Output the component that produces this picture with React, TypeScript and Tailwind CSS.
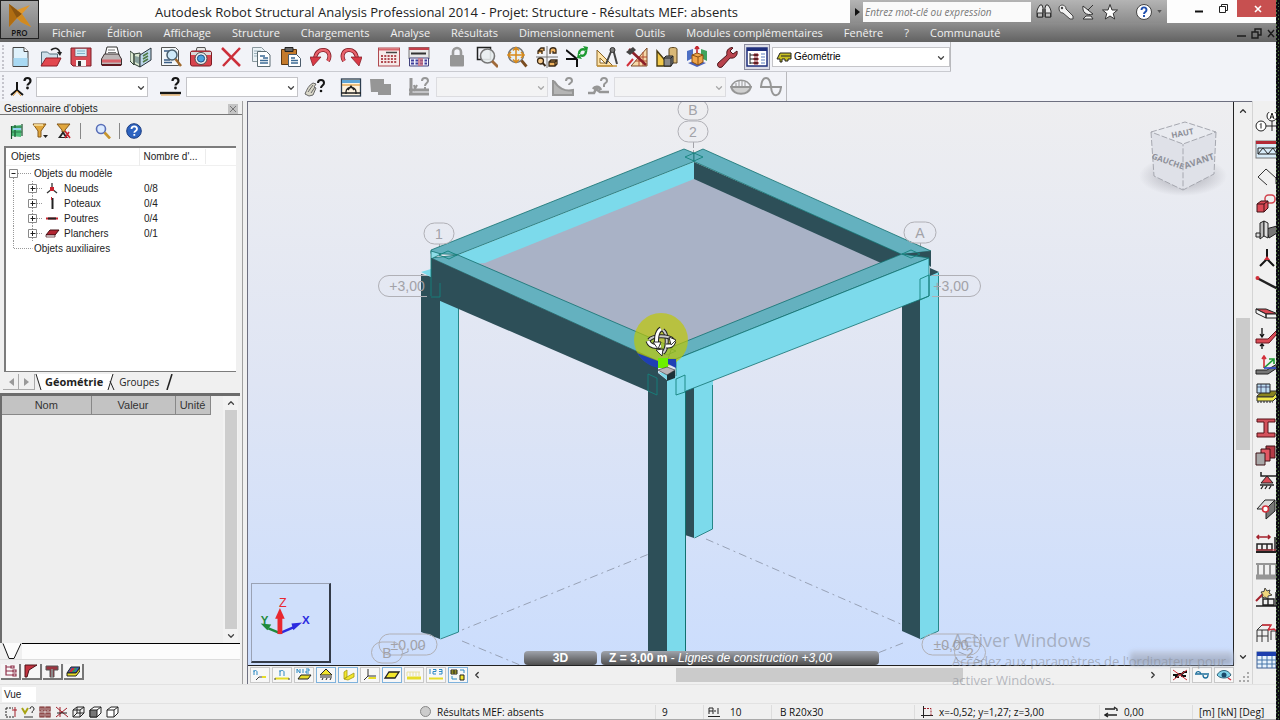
import type { ReactNode } from 'react'
import { ChevronDown, ChevronLeft, ChevronRight, ChevronUp } from 'lucide-react'

const MENUS = [
  'Fichier',
  'Édition',
  'Affichage',
  'Structure',
  'Chargements',
  'Analyse',
  'Résultats',
  'Dimensionnement',
  'Outils',
  'Modules complémentaires',
  'Fenêtre',
  '?',
  'Communauté',
]

interface Tool {
  name: string
  icon: ReactNode
}

const FILE_TOOLS: Tool[] = [
  {
    name: 'Nouveau',
    icon: (
      <g>
        <path d="M3 1.5h11l4 4v15H3z" fill="#dff1fb" stroke="#444" />
        <path d="M3.5 12h14v8h-14z" fill="#a9d9f3" />
        <path d="M14 1.5v4h4" fill="#fff" stroke="#444" />
      </g>
    ),
  },
  {
    name: 'Ouvrir',
    icon: (
      <g>
        <path d="M1.5 19V6h6l2 2h8v5" fill="#cfe0ea" stroke="#56707e" />
        <path d="M1 20l5-8h15l-4 8z" fill="#e2474f" stroke="#8d1c26" />
        <path d="M11 4c4-3 8-2 9 3" fill="none" stroke="#222" strokeWidth="1.6" />
        <path d="M17 6h5l-2 4z" fill="#222" />
      </g>
    ),
  },
  {
    name: 'Enregistrer',
    icon: (
      <g>
        <path d="M1 2h20v18H3l-2-2z" fill="#d94a55" stroke="#7d1e28" />
        <path d="M5 2.5h12v8H5z" fill="#d3ebf5" stroke="#8c3b45" strokeWidth=".7" />
        <path d="M7 5h8M7 7.500h8" stroke="#7fb0c6" />
        <path d="M6 14h10v6H6z" fill="#f6f6f6" />
        <path d="M8 15h3v5H8z" fill="#333" />
      </g>
    ),
  },
  {
    name: 'Imprimer',
    icon: (
      <g>
        <path d="M5 9l2-8h10l2 8z" fill="#fff" stroke="#333" />
        <path d="M8 4h7M8 6.500h8" stroke="#777" />
        <path d="M1.500 13l3-5h14l3 5v6h-20z" fill="#bdb6b6" stroke="#3b3030" />
        <path d="M2 13.500h19v3H2z" fill="#d9636b" />
        <path d="M2 19h19" stroke="#5f1a20" strokeWidth="2" />
      </g>
    ),
  },
  {
    name: 'Note de calcul',
    icon: (
      <g>
        <path d="M0 5l4 3v11l-4-4zM10 7v14l-6-3V8z" fill="#dbe9d2" stroke="#2f3f35" />
        <path d="M10 9l11-7v12l-11 7z" fill="#bcd7ea" stroke="#28333b" />
        <path d="M13 10l5-3M13 13l5-3M13 16l5-3" stroke="#4f7a45" strokeWidth="1.500" />
        <path d="M5 10l4 1v7l-4-2z" fill="#8aa3a0" />
      </g>
    ),
  },
  {
    name: 'Aperçu avant impression',
    icon: (
      <g>
        <path d="M1.500 1.500h14l3 3v15h-17z" fill="#f3f7fa" stroke="#555" />
        <path d="M4 5h6M4 14h6M4 16.500h8" stroke="#3a5e86" strokeWidth="1.400" />
        <circle cx="12" cy="9" r="5" fill="#cfeafa" stroke="#4a6170" strokeWidth="1.500" />
        <path d="M15.500 13l5.500 7" stroke="#a0692d" strokeWidth="2.500" />
      </g>
    ),
  },
  {
    name: 'Capture d’écran',
    icon: (
      <g>
        <path d="M7 1.500h8l1 4H6z" fill="#e8e8e8" stroke="#555" />
        <rect x=".5" y="5" width="21" height="15" rx="2" fill="#d8444e" stroke="#7e1c24" />
        <path d="M1 6h20v3H1z" fill="#d9d9d9" />
        <circle cx="11" cy="12.500" r="6" fill="#f1f1f1" stroke="#4a4a4a" />
        <circle cx="11" cy="12.500" r="3.600" fill="#4aa2dd" stroke="#1c4f86" />
      </g>
    ),
  },
  {
    name: 'Supprimer',
    icon: <path d="M2 2l18 18M20 2L3 20" stroke="#cc2f3a" strokeWidth="2.500" />,
  },
  {
    name: 'Copier',
    icon: (
      <g>
        <path d="M2.500 1.500h9l3 3v11h-12z" fill="#e9f1f5" stroke="#8a989e" />
        <path d="M4 5h7M4 7.500h8M4 10h8" stroke="#9db2bc" />
        <path d="M7.500 5.500h9l3.500 3.500v11.500H7.500z" fill="#fff" stroke="#5b6b72" />
        <path d="M10 10h5M10 17h8M10 14.500h8M13 12h5" stroke="#3d6b95" strokeWidth="1.300" />
      </g>
    ),
  },
  {
    name: 'Coller',
    icon: (
      <g>
        <path d="M1.500 3.500h15v15h-15z" fill="#c47a2c" stroke="#5d3710" />
        <path d="M5 1.500h8v4H5z" fill="#666" stroke="#222" />
        <path d="M8.500 8.500h8l4 4v8h-12z" fill="#fff" stroke="#4b5b6b" />
        <path d="M11 12h4M11 14.500h7M11 17h7" stroke="#3d6b95" strokeWidth="1.300" />
      </g>
    ),
  },
  {
    name: 'Annuler',
    icon: (
      <g>
        <path d="M5 14C5 6 10 3.500 14 4c5 .6 7 6 4 11" fill="none" stroke="#7d1822" strokeWidth="4" />
        <path d="M5 14C5 6 10 3.500 14 4c5 .6 7 6 4 11" fill="none" stroke="#e8636c" strokeWidth="2.400" />
        <path d="M0 11h11l-8 9z" fill="#d93a46" stroke="#7d1822" strokeWidth=".7" />
      </g>
    ),
  },
  {
    name: 'Rétablir',
    icon: (
      <g>
        <path d="M17 14C17 6 12 3.500 8 4c-5 .6-7 6-4 11" fill="none" stroke="#7d1822" strokeWidth="4" />
        <path d="M17 14C17 6 12 3.500 8 4c-5 .6-7 6-4 11" fill="none" stroke="#e8636c" strokeWidth="2.400" />
        <path d="M22 11H11l8 9z" fill="#d93a46" stroke="#7d1822" strokeWidth=".7" />
      </g>
    ),
  },
]

const CALC_TOOLS: Tool[] = [
  {
    name: 'Calculer',
    icon: (
      <g>
        <rect x=".5" y="2" width="21" height="18" fill="#f6e9e9" stroke="#b04a50" />
        <path d="M1 2.500h20v2H1z" fill="#d9636b" />
        <path d="M8 6.500h11" stroke="#444" strokeWidth="1.500" />
        <path d="M3 10h16M3 13h16M3 16h16" stroke="#b04a50" strokeWidth="2" strokeDasharray="2 1.300" />
      </g>
    ),
  },
  {
    name: 'Gestionnaire de calculs',
    icon: (
      <g>
        <rect x="1" y="1.500" width="20" height="11" fill="#e9e9e9" stroke="#777" />
        <path d="M1 1.500h20v2.500H1z" fill="#c4404b" />
        <path d="M3 7.500h15" stroke="#333" strokeWidth="2" />
        <path d="M1.500 12h19v8h-19z" fill="#f2f2fa" stroke="#43437c" />
        <path d="M3 14.500h16M3 17.500h16" stroke="#3e3e9c" strokeWidth="2" strokeDasharray="3 1.500" />
        <path d="M10 12h5v8h-5z" fill="#d06a75" opacity=".7" />
      </g>
    ),
  },
]

const VIEW_TOOLS: Tool[] = [
  {
    name: 'Verrouiller',
    icon: (
      <g>
        <path d="M7 10V6a4 4 0 0 1 8 0v4" fill="none" stroke="#9a9a9a" strokeWidth="2.600" />
        <rect x="4" y="9" width="14" height="11.500" rx="1" fill="#969696" />
      </g>
    ),
  },
  {
    name: 'Zoom fenêtre',
    icon: (
      <g>
        <path d="M1.500 1.500h13v12h-13z" fill="none" stroke="#222" strokeWidth="1.500" />
        <circle cx="11.500" cy="10" r="7" fill="#e9eef0" fillOpacity=".9" stroke="#777" strokeWidth="1.600" />
        <path d="M16 15l6 6" stroke="#a06a3a" strokeWidth="2.800" />
      </g>
    ),
  },
  {
    name: 'Zoom tout',
    icon: (
      <g>
        <circle cx="10" cy="9" r="7.500" fill="#e6eef3" stroke="#777" strokeWidth="1.600" />
        <path d="M10 2v14M3 9h14M7 4.500l3-3 3 3M7 13.500l3 3 3-3M5 6L2 9l3 3M15 6l3 3-3 3" fill="none" stroke="#d98a1a" strokeWidth="1.500" />
        <path d="M15.500 14.500l5 6" stroke="#7a4c20" strokeWidth="2.800" />
      </g>
    ),
  },
  {
    name: 'Vue, zoom, rotation',
    icon: (
      <g fill="none" stroke="#3b2a18" strokeWidth="1.300">
        <path d="M11 0v22M0 11h22" stroke="#777" strokeWidth="1" />
        <path d="M2 8V5l3-3h3v3M2 5h4v3" fill="#f0b35f" />
        <path d="M14 8V4c0-3 6-3 6 0v3h-3V5" fill="#f0b35f" />
        <circle cx="4.500" cy="15" r="3" fill="#f6c98a" />
        <path d="M6.500 17l3 3" strokeWidth="2" />
        <path d="M13 16l2-2h6v4l-2 2h-6zM13 16h6v4M19 16l2-2" fill="#f0b35f" />
      </g>
    ),
  },
  {
    name: 'Régénérer',
    icon: (
      <g fill="none">
        <path d="M0 4l11 9M11 13v8M0 13h11" stroke="#111" strokeWidth="2" />
        <path d="M13 8c0-4 3-6 7-4M20 5c0 4-3 6-6 4" stroke="#1d9a31" strokeWidth="2.400" />
        <path d="M17 0l5 1-1 5zM12 7l-1 5 5 1z" fill="#1d9a31" />
      </g>
    ),
  },
  {
    name: 'Lignes de construction',
    icon: (
      <g>
        <path d="M1 4v16h16z" fill="#ffe3a8" stroke="#8a6424" />
        <path d="M4 12v5h5z" fill="#fff" stroke="#8a6424" />
        <path d="M16 3l-6 15M17 3l4 15" stroke="#444" strokeWidth="2" />
        <circle cx="16.500" cy="4" r="2.500" fill="#777" stroke="#333" />
        <path d="M1 20h20" stroke="#c9973e" strokeWidth="1.500" />
      </g>
    ),
  },
  {
    name: 'Maillage',
    icon: (
      <g>
        <path d="M21 2v18H5z" fill="#f6d9a8" stroke="#7d4a24" />
        <path d="M17 6v14M13 10v10M9 15h12M13 11h8" stroke="#b04a30" />
        <path d="M3 3l17 16" stroke="#8d1f28" strokeWidth="2.500" />
        <path d="M0 6l7-5 3 3-6 5z" fill="#444" />
        <path d="M7 13l-6 7" stroke="#d22f3a" strokeWidth="2" />
      </g>
    ),
  },
  {
    name: 'Attributs',
    icon: (
      <g>
        <path d="M1 5v15h13z" fill="#f2c94b" stroke="#4a3c12" strokeWidth="1.400" />
        <path d="M13 3c0-2 8-2 8 0v14h-8z" fill="#d9b877" stroke="#5a4520" />
        <path d="M8 12l2-2h7v7l-2 3H8z" fill="#888" stroke="#222" />
        <path d="M8 12h7v8M15 12l2-2" fill="none" stroke="#222" />
      </g>
    ),
  },
  {
    name: 'Affichage des attributs',
    icon: (
      <g>
        <path d="M1 5l6-2v9l-6 3z" fill="#4d6fc4" />
        <path d="M21 5l-6-2v9l6 3z" fill="#3fa35c" />
        <path d="M2 17l9-3 9 3-9 4z" fill="#4c62b8" />
        <path d="M6 9l5-2 6 2v7l-5 3-6-3z" fill="#f0a54a" stroke="#8a4f12" />
        <path d="M6 9l6 2 5-2M12 11v8" fill="none" stroke="#8a4f12" />
        <path d="M11 0v7M9 3l2-3 2 3" stroke="#c42730" strokeWidth="1.600" fill="none" />
      </g>
    ),
  },
  {
    name: 'Outils',
    icon: (
      <path
        d="M2 17l9-8c-1-4 1-7 5-7.500l1 .5-3 3 3 3 4-3c1 4-2 8-7 7l-8 9c-3 1.500-5.500-1-4-4z"
        fill="#b9434e"
        stroke="#4b1419"
      />
    ),
  },
]

const SELECT_NODE = (
  <g>
    <path d="M7 6v8M7 14l-6 5M7 14l6 5" fill="none" stroke="#151515" strokeWidth="2" />
    <path d="M3 20l4-5 4 5" fill="none" stroke="#e39b3b" />
    <path d="M14.500 5c0-4 6-4 6 0 0 2.500-3 2.500-3 4.500" fill="none" stroke="#151515" strokeWidth="2.200" />
    <circle cx="17.500" cy="12" r="1.400" fill="#151515" />
  </g>
)

const SELECT_BAR = (
  <g>
    <path d="M0 17h21" stroke="#151515" strokeWidth="2.400" />
    <path d="M1 19h19" stroke="#e39b3b" />
    <path d="M12.500 5c0-4 6-4 6 0 0 2.500-3 2.500-3 4.500" fill="none" stroke="#151515" strokeWidth="2.200" />
    <circle cx="15.500" cy="12" r="1.400" fill="#151515" />
  </g>
)

const SELECT_HAND = (
  <g>
    <path d="M1 18c2-5 4-9 8-11l3 1-2 3 2 1-3 7-4 1z" fill="#d9d7c8" stroke="#666" />
    <path d="M4 16l5-7M7 17l4-6" stroke="#666" />
    <path d="M14 7c0-4 6-4 6 0 0 2.500-3 2.500-3 5" fill="none" stroke="#151515" strokeWidth="2" />
    <circle cx="17" cy="15" r="1.300" fill="#151515" />
  </g>
)

const SELECT_FRAME = (
  <g>
    <rect x="1.500" y="3" width="19" height="17" fill="#fdf3df" stroke="#2c3e50" strokeWidth="1.300" />
    <path d="M2 4h18v3H2z" fill="#5ea5d6" />
    <path d="M2 9h18" stroke="#d98a1a" />
    <path d="M6 18v-2c0-6 10-6 10 0v2M1 17h20M8 14l3-4 3 4" fill="none" stroke="#222" strokeWidth="1.300" />
  </g>
)

const SELECT_GREY = <path d="M0 3h14v5h7v11H8v-3H1z" fill="#969696" />

const CASE_LOAD = (
  <g>
    <path d="M3 2v15M1 14h20M1 18h20" stroke="#969696" strokeWidth="3" />
    <path d="M6 9l1 4 2-4M14 5c0-4 6-4 6 0 0 2-3 2-3 5M17 11v2" fill="none" stroke="#969696" strokeWidth="2" />
  </g>
)

const MODE_A = (
  <g>
    <path d="M1 4v15h20v-5c-8 2-15-2-19-9" fill="#b5b5b5" stroke="#969696" strokeWidth="2" />
    <path d="M14 5c0-4 6-4 6 0 0 2-3 2-3 4" fill="none" stroke="#969696" strokeWidth="2" />
  </g>
)

const MODE_B = (
  <g>
    <path d="M0 17h6l2-4 4 3h9M5 13c2-3 6-3 8 1" fill="none" stroke="#969696" strokeWidth="2.600" />
    <path d="M13 5c0-4 6-4 6 0 0 2-3 2-3 4v2" fill="none" stroke="#969696" strokeWidth="2" />
  </g>
)

const DIAGRAM_BOWL = (
  <g fill="none" stroke="#969696" strokeWidth="1.500">
    <path d="M1 11c4-9 16-9 20 0" />
    <path d="M1 11h20c-3 9-17 9-20 0z" fill="#d0d0d0" strokeWidth="2" />
    <path d="M6 7v4M9 5v6M12 5v6M15 6v5" strokeWidth="1" />
  </g>
)

const DIAGRAM_WAVE = (
  <path d="M0 11h22M1 11c1-12 9-12 10 0s9 10 10 0" fill="none" stroke="#969696" strokeWidth="2" />
)

const SIDE_TOOLS: Tool[][] = [
  [
    {
      name: 'Axes de construction',
      icon: (
        <g fill="none" stroke="#222">
          <circle cx="6" cy="14" r="5" fill="#fff" />
          <path d="M6 11.500v5M5 12.500l1-1M11 14h11M17 9v10" />
          <circle cx="17" cy="4" r="5" fill="#fff" />
          <path d="M15 7l2-6 2 6M15.700 5h2.600" />
        </g>
      ),
    },
    {
      name: 'Profilés',
      icon: (
        <g>
          <rect x="1" y="2" width="22" height="17" fill="#d8ecf9" stroke="#777" />
          <path d="M1 2h22v3H1z" fill="#b32a36" />
          <path d="M3 9h19v6H3zM3 15l5-6 5 6 5-6 4 6" fill="none" stroke="#222" />
        </g>
      ),
    },
    {
      name: 'Polyligne',
      icon: <path d="M12 19L3 11l8-8 10 9v6" fill="none" stroke="#333" />,
    },
    {
      name: 'Objets',
      icon: (
        <g>
          <rect x="10" y="2" width="10" height="8" rx="3.500" fill="none" stroke="#d1444e" strokeWidth="1.500" />
          <path d="M2 11l4-3h7v7l-4 4H2z" fill="#db4a56" stroke="#3e1216" />
          <path d="M2 11h7v8M9 11l4-3" fill="none" stroke="#3e1216" />
        </g>
      ),
    },
    {
      name: 'Matériaux',
      icon: (
        <g>
          <path d="M11 9l11-3v7l-8 5z" fill="#777" stroke="#222" />
          <path d="M5 3l4-2v15l-4 3z" fill="#bbb" stroke="#222" />
          <path d="M9 1l4 2v15l-4-2z" fill="#ddd" stroke="#222" />
          <path d="M1 13h4v4H1z" fill="#ddd" stroke="#222" />
        </g>
      ),
    },
    {
      name: 'Noeuds',
      icon: (
        <g>
          <path d="M12 2v10M12 12l-7 7M12 12l7 7" stroke="#151515" strokeWidth="2" />
          <path d="M12 9l3 4H9z" fill="#d22f3a" />
        </g>
      ),
    },
    {
      name: 'Barres',
      icon: (
        <g>
          <path d="M2 4l21 11" stroke="#222" strokeWidth="2.500" />
          <circle cx="2.500" cy="4" r="2" fill="#d22f3a" />
        </g>
      ),
    },
    {
      name: 'Planchers',
      icon: (
        <g>
          <path d="M1 8h10l12 5H11z" fill="#d94a55" stroke="#222" />
          <path d="M1 8v4l10 5v-4zM11 13h12v4H11z" fill="#f3f3f3" stroke="#222" />
        </g>
      ),
    },
    {
      name: 'Radiers',
      icon: (
        <g>
          <path d="M1 11h12l9-9v4l-8 9H1z" fill="#d94a55" stroke="#6a1820" />
          <path d="M7 0v9M5 6l2 3 2-3M7 21v-5M5 18l2-2 2 2" fill="none" stroke="#111" strokeWidth="1.300" />
        </g>
      ),
    },
    {
      name: 'Repère',
      icon: (
        <g fill="none">
          <path d="M1 15h11l10-6v4l-9 6H1z" fill="#777" stroke="#222" />
          <path d="M9 13V2M7 4l2-3 2 3" stroke="#d22f3a" strokeWidth="1.600" />
          <path d="M9 13l9-8M14 4h5v5" stroke="#1d9a31" strokeWidth="1.600" />
          <path d="M9 13h13" stroke="#2e46c8" strokeWidth="1.600" />
        </g>
      ),
    },
    {
      name: 'Panneaux',
      icon: (
        <g>
          <path d="M2 14l6-5h15l-4 6H2z" fill="#8a8420" stroke="#333" />
          <path d="M2 15h16l5-6v5l-5 5H2z" fill="#f2ea4c" stroke="#333" />
          <path d="M2 2h13v9H2z" fill="#bcdcf2" stroke="#222" />
          <path d="M6 2v9M11 2v9M2 5h13" stroke="#335" strokeWidth=".8" />
          <path d="M2 20h16" stroke="#222" strokeDasharray="2 1" />
        </g>
      ),
    },
  ],
  [
    {
      name: 'Section',
      icon: (
        <path d="M2 2h18v3h-7v11h7v4H2v-4h7V5H2z" fill="#d4525c" stroke="#541319" />
      ),
    },
    {
      name: 'Épaisseurs',
      icon: (
        <g stroke="#3e1216">
          <path d="M11 2h9v12h-9z" fill="#b43b46" />
          <path d="M6 5h9v12H6z" fill="#e25864" />
          <path d="M1 9h9v12H1z" fill="#a8a8a8" />
        </g>
      ),
    },
    {
      name: 'Appuis',
      icon: (
        <g>
          <path d="M6 1v4h16" fill="none" stroke="#222" strokeWidth="1.500" />
          <path d="M12 5l6 7H6z" fill="#d94a55" stroke="#222" />
          <path d="M5 14h14M6 18l2-3M10 18l2-3M14 18l2-3" stroke="#222" strokeWidth="1.300" />
        </g>
      ),
    },
    {
      name: 'Relâchements',
      icon: (
        <g>
          <path d="M2 11l8-9h10l-9 9z" fill="#ddd" stroke="#222" />
          <path d="M11 11l9-9v11l-9 8z" fill="#777" stroke="#222" />
          <circle cx="10.500" cy="11" r="3" fill="#fff" stroke="#d22f3a" strokeWidth="1.600" />
        </g>
      ),
    },
  ],
  [
    {
      name: 'Charges roulantes',
      icon: (
        <g>
          <path d="M2 4h13M4 2L2 4l2 2M13 2l2 2-2 2" fill="none" stroke="#a3202b" strokeWidth="1.500" />
          <path d="M2 11h15v6H2zM7 11v6M12 11v6M20 4v14" fill="none" stroke="#222" strokeWidth="1.500" />
          <path d="M1 19h22" stroke="#222" strokeWidth="2" />
          <path d="M1 17h21" stroke="#d22f3a" />
        </g>
      ),
    },
    {
      name: 'Charges',
      icon: (
        <g stroke="#969696" fill="none">
          <path d="M3 3v14M9 3v14M15 3v14M21 3v14M1 4h22" strokeWidth="2" />
          <path d="M1 17h22" strokeWidth="5" />
        </g>
      ),
    },
    {
      name: 'Assistant charges',
      icon: (
        <g>
          <path d="M1 14l8-8" stroke="#a3202b" strokeWidth="2" />
          <path d="M10 1l2 3 3-1-1 3 3 2-4 1v3l-3-2-3 1 1-3-2-3 3-.500z" fill="#f1d67c" stroke="#444" />
          <path d="M8 12h11v6H8zM13 12v6M21 5v14M1 19h22" fill="none" stroke="#222" strokeWidth="1.400" />
        </g>
      ),
    },
  ],
  [
    {
      name: 'Bibliothèque de structures',
      icon: (
        <g fill="none" stroke="#333">
          <path d="M2 8h11v12M2 8v12M7 8v12M2 14h11M2 8l5-5h8M13 8l3-5M16 9h7M16 9v9M21 9v9" />
          <path d="M7 3h9l-3 5M13 8l6-1 4 3" stroke="#d22f3a" strokeWidth="1.400" />
        </g>
      ),
    },
    {
      name: 'Tableaux',
      icon: (
        <g>
          <rect x="2" y="3" width="19" height="16" fill="#e8f3fd" stroke="#3f5f92" />
          <path d="M2 3h19v4H2z" fill="#1d3fae" />
          <path d="M7 7v12M12 7v12M17 7v12M2 11h19M2 15h19" stroke="#4474a8" />
        </g>
      ),
    },
  ],
]

const PANEL_TOOLS: Tool[] = [
  {
    name: 'Arborescence',
    icon: (
      <g>
        <path d="M4 3l9-1v12l-9-1z" fill="#4fc07a" />
        <path d="M3.500 3v13M7 2v12M14 1v12" stroke="#16512c" strokeWidth="1.200" />
        <path d="M4 4h10M4 9h10" stroke="#2a7a48" />
        <path d="M5 6h8" stroke="#8fd0ee" strokeWidth="2" />
      </g>
    ),
  },
  {
    name: 'Filtrer',
    icon: (
      <g>
        <path d="M1 1h13l-5 7v6H6V8z" fill="#e0a63c" stroke="#84591a" />
        <path d="M2 2h9" stroke="#fbe6a8" strokeWidth="1.500" />
        <path d="M11 12h5l-2.500 3z" fill="#222" />
      </g>
    ),
  },
  {
    name: 'Supprimer le filtre',
    icon: (
      <g>
        <path d="M1 1h13l-5 6v2H6V7z" fill="#e0a63c" stroke="#84591a" />
        <path d="M2 15l5-7 5 7z" fill="#222" />
        <path d="M5 14l2-3 2 3z" fill="#f0f0f0" />
        <path d="M13 9l-4 6M9 8l5 7" fill="none" stroke="#c9242f" strokeWidth="1.600" />
      </g>
    ),
  },
  {
    name: 'Rechercher',
    icon: (
      <g>
        <circle cx="6" cy="6" r="4.500" fill="#dbeaff" stroke="#5a6fb8" strokeWidth="1.600" />
        <path d="M9.500 9.500l5.500 6" stroke="#c7952e" strokeWidth="2.600" />
      </g>
    ),
  },
  {
    name: 'Aide',
    icon: (
      <g>
        <circle cx="8" cy="8" r="7.300" fill="#2d63c0" stroke="#1a3c80" />
        <path d="M5.500 6c0-3.500 5.500-3.500 5.500 0 0 2-2.700 2-2.700 3.800M8.300 11v1.800" fill="none" stroke="#fff" strokeWidth="1.800" />
      </g>
    ),
  },
]

const TREE_ROWS = [
  {
    label: 'Noeuds',
    count: '0/8',
    icon: (
      <g>
        <path d="M46 2v6M46 8l-5 4M46 8l5 4" fill="none" stroke="#333" strokeWidth="1.300" />
        <path d="M44 6h4v4h-4z" fill="#c9242f" />
      </g>
    ),
  },
  {
    label: 'Poteaux',
    count: '0/4',
    icon: (
      <g>
        <path d="M46.500 2v11" stroke="#222" strokeWidth="2" />
        <path d="M45.500 1v3" stroke="#c9242f" />
      </g>
    ),
  },
  {
    label: 'Poutres',
    count: '0/4',
    icon: (
      <g>
        <path d="M40 7.500h12" stroke="#c9242f" strokeWidth="2" />
        <path d="M42 7.500h8" stroke="#222" strokeWidth="2" />
      </g>
    ),
  },
  {
    label: 'Planchers',
    count: '0/1',
    icon: (
      <g>
        <path d="M40 9l4-5h9l-4 5z" fill="#b32531" stroke="#421014" />
        <path d="M40 9h9v2h-9z" fill="#fff" stroke="#421014" strokeWidth=".7" />
      </g>
    ),
  },
]

const DISPLAY_TOOLS: Tool[] = [
  {
    name: 'Numéros de noeuds',
    icon: (
      <g>
        <path d="M3 7V2M3 4c0-2 3-2 3 0v3" fill="none" stroke="#2d8ac4" />
        <path d="M5 12l3-3h7" fill="none" stroke="#444" />
        <path d="M11 8h4v2h-4z" fill="#e6dc28" />
      </g>
    ),
  },
  {
    name: 'Numéros de barres',
    icon: (
      <g>
        <path d="M7 8V2M7 4c0-2 4-2 4 0v4" fill="none" stroke="#2d8ac4" />
        <path d="M2 10.500h14" stroke="#e6dc28" strokeWidth="2" />
        <path d="M1 11h2M15 11h2" stroke="#444" />
      </g>
    ),
  },
  {
    name: 'Numéros de panneaux',
    icon: (
      <g>
        <path d="M2 5V1l3 4V1M8 1v4M11 1h3v2h-3v2h3" fill="none" stroke="#2d8ac4" />
        <path d="M3 11l3-4h10l-3 4z" fill="#e6dc28" stroke="#222" />
      </g>
    ),
  },
  {
    name: 'Appuis',
    icon: (
      <g>
        <path d="M9 1l6 6H3z" fill="#f2e62c" stroke="#222" />
        <path d="M3 9h12M5 12l1-2M9 12l1-2M13 12l1-2" stroke="#222" />
      </g>
    ),
  },
  {
    name: 'Profilés',
    icon: (
      <g>
        <path d="M5 4l3-2v7l-3 2zM5 11l3-2 7-4v4l-6 3z" fill="#f2e62c" stroke="#a59a14" strokeWidth=".8" />
      </g>
    ),
  },
  {
    name: 'Repères locaux',
    icon: (
      <g fill="none">
        <path d="M7 1v7h8M7 8l-4 4" stroke="#333" />
        <path d="M8 9h7v2H7z" fill="#e6dc28" />
      </g>
    ),
  },
  { name: 'Panneaux', icon: <path d="M2 10l4-6h10l-4 6z" fill="#f2e62c" stroke="#222" strokeWidth="1.300" /> },
  {
    name: 'Charges',
    icon: (
      <g>
        <path d="M2 4v4M5 4v4M8 4v4M11 4v4M14 4v4M2 4h13" stroke="#e8e0a0" />
        <path d="M2 10h14" stroke="#e6dc28" strokeWidth="3" />
      </g>
    ),
  },
  {
    name: 'Valeurs des charges',
    icon: (
      <g>
        <path d="M3 1v5M6 1.500h3v2H6v2.500h3M12 1.500h3V6h-3M12 3.500h3" fill="none" stroke="#2d8ac4" />
        <path d="M2 10.500h14" stroke="#e6dc28" strokeWidth="2" />
      </g>
    ),
  },
  {
    name: 'Attributs',
    icon: (
      <g>
        <path d="M2 2h6v4H2zM5 2v4M2 4h6" fill="#f2e62c" stroke="#222" />
        <path d="M11 7h4v5h-4z" fill="#f2e62c" stroke="#222" />
        <path d="M11 2h4v3M3 8v3h5" fill="none" stroke="#2d8ac4" />
      </g>
    ),
  },
]

const SCENE_TOOLS: Tool[] = [
  {
    name: 'Masquer',
    icon: (
      <g>
        <path d="M2 7h4l2-1h3l2-2h3M4 9h4M10 8h5" fill="none" stroke="#111" strokeWidth="2" />
        <path d="M2 2l14 10M16 2L2 12" stroke="#d22f3a" />
      </g>
    ),
  },
  {
    name: 'Lunettes',
    icon: <path d="M2 6h14M3 5c1-2 4-2 5 1M10 7c0 4 5 4 5 0" fill="none" stroke="#1e6f9c" strokeWidth="1.300" />,
  },
  {
    name: 'Visibilité',
    icon: (
      <g>
        <path d="M2 7c3-6 11-6 14 0-3 4-11 4-14 0z" fill="#7fd3ea" stroke="#32657c" />
        <circle cx="9" cy="7" r="2.500" fill="#1b4a6a" />
        <path d="M13 10l3 2" stroke="#d22f3a" strokeWidth="1.500" />
      </g>
    ),
  },
]

const PANEL_TABS: Tool[] = [
  {
    name: 'Objets',
    icon: <path d="M3 1v10h7M3 3h5M3 7h7M8 2h3v2H8zM10 6h3v2h-3zM10 10h3v2h-3z" fill="none" stroke="#8d2f48" strokeWidth="1.200" />,
  },
  { name: 'Assemblages', icon: <path d="M1 1h12l-8 5-2 7H1z" fill="#c2323e" stroke="#4c1217" /> },
  {
    name: 'Fondations',
    icon: (
      <g>
        <path d="M1 2h12v4H9v7H5V6H1z" fill="#9a3540" stroke="#555" />
        <path d="M6 5h2v8H6z" fill="#888" />
      </g>
    ),
  },
  {
    name: 'Vues',
    icon: (
      <g>
        <path d="M1 9l4-6h9l-4 6z" fill="#3468c4" stroke="#222" />
        <path d="M3 8l3-4h3L6 8z" fill="#d22f3a" />
        <path d="M6 8l3-4h2L8 8z" fill="#2fa04a" />
        <path d="M1 9h9l4-5v3l-4 5H1z" fill="#e6dc28" stroke="#222" />
      </g>
    ),
  },
]

const STATUS_TOOLS: Tool[] = [
  {
    name: 'Accrochage',
    icon: (
      <g fill="none">
        <path d="M2 3h7M2 3v9h9" stroke="#222" strokeDasharray="2 1" />
        <path d="M8 5h5M11 2v10" stroke="#a3202b" />
      </g>
    ),
  },
  {
    name: 'Aide saisie',
    icon: (
      <g fill="none">
        <path d="M1 3l3 5 3-5" stroke="#a8a414" strokeWidth="2" />
        <path d="M9 4c0-3 4-3 4 0 0 2-2 1.500-2 4" stroke="#222" />
        <path d="M3 12h9" stroke="#333" />
      </g>
    ),
  },
  {
    name: 'Quatre vues',
    icon: (
      <path d="M2 2h4v4H2zM8 2h4v4H8zM2 8h4v4H2zM8 8h4v4H8zM4 2v3M10 2v3M4 8v4M10 8v4" fill="none" stroke="#722" strokeWidth="1.200" />
    ),
  },
  {
    name: 'Rotation',
    icon: (
      <g>
        <path d="M1 2l12 10M1 12L12 3M5 2v10" stroke="#a3202b" />
        <path d="M2 8h10" stroke="#222" />
      </g>
    ),
  },
  {
    name: 'Filaire',
    icon: <path d="M1 5l4-3h7v6l-4 4H1zM1 5h7v7M8 5l4-3M5 2v6h7M5 8l-4 4" fill="none" stroke="#222" />,
  },
  {
    name: 'Ombré',
    icon: (
      <g stroke="#222">
        <path d="M1 5l4-3h7v6l-4 4H1z" fill="#fff" />
        <path d="M1 5h7v7H1z" fill="#777" />
        <path d="M8 5l4-3" />
      </g>
    ),
  },
  {
    name: 'Faces cachées',
    icon: <path d="M1 5l4-3h7v6l-4 4H1zM1 5h7v7M8 5l4-3" fill="#fff" stroke="#222" />,
  },
]

// Static speckle along the right border of the desktop.
const SPECKLE_COLORS = ['#4a6d3c', '#9aa0c8', '#26263c', '#7a3f6a', '#c9d2c0', '#2f6f7c']
const SPECKLES = Array.from({ length: 90 }, (_, i) => ({
  x: (i * i * 3 + i) % 4,
  y: (i * 37) % 96,
  fill: SPECKLE_COLORS[(i * i + i * 5) % SPECKLE_COLORS.length],
}))

function ToolButton({ tool }: { tool: Tool }) {
  return (
    <button type="button" aria-label={tool.name} className="flex h-6 w-[30px] shrink-0 items-center justify-center">
      <svg viewBox="0 0 22 22" className="size-[22px]" aria-hidden="true">
        {tool.icon}
      </svg>
    </button>
  )
}

function Combo({ label, disabled, className }: { label: string; disabled?: boolean; className: string }) {
  return (
    <div className={`relative h-5 shrink-0 ${className}`}>
      <select
        aria-label={label}
        disabled={disabled}
        className="block size-full appearance-none border border-[#c4c4c8] bg-white disabled:border-[#dcdce0] disabled:bg-[#f3f3f4]"
      />
      <ChevronDown
        strokeWidth={3}
        className={`pointer-events-none absolute top-1.5 right-0.5 size-2.5 ${disabled ? 'text-[#a8a8a8]' : 'text-[#444]'}`}
      />
    </div>
  )
}

function SmallIcon({ tool, framed }: { tool: Tool; framed?: boolean }) {
  return (
    <button
      type="button"
      aria-label={tool.name}
      className={`flex h-4 w-5 shrink-0 items-center justify-center border bg-[#f7f7f7] ${framed ? 'border-[#7fb2dc]' : 'border-[#c9c9c9]'}`}
    >
      <svg viewBox="0 0 18 14" className="h-3.5 w-[18px]" aria-hidden="true">
        {tool.icon}
      </svg>
    </button>
  )
}

function Header() {
  return (
    <header className="relative shrink-0">
      <div className="flex h-[23px] bg-[#fdfdfd]">
        <h1 className="flex-1 pl-[155px] font-['Open_Sans',sans-serif] text-[13px] leading-6 whitespace-nowrap text-[#222]">
          Autodesk Robot Structural Analysis Professional 2014 - Projet: Structure - Résultats MEF: absents
        </h1>
        <div className="flex w-[317px] shrink-0 items-center bg-linear-to-b from-[#b4b4b4] to-[#8c8c8c]">
          <span className="flex w-[13px] justify-center">
            <svg viewBox="0 0 6 8" className="h-2 w-1.5" aria-hidden="true">
              <path d="M1 0l5 4-5 4z" fill="#111" />
            </svg>
          </span>
          <input
            type="text"
            aria-label="Recherche"
            placeholder="Entrez mot-clé ou expression"
            className="h-5 w-[168px] bg-[#fafafa] px-0.5 font-['Open_Sans',sans-serif] text-[10px] italic placeholder:text-[#777]"
          />
          <div className="flex items-center gap-1 pl-1">
            <button type="button" aria-label="Rechercher">
              <svg viewBox="0 0 18 18" className="size-[18px]" aria-hidden="true">
                <path d="M3 5l2-3h2l1 3v9H2V8zM15 5l-2-3h-2l-1 3v9h6V8z" fill="#e8e8e8" stroke="#333" />
                <path d="M7 6h4v4H7z" fill="#555" />
                <path d="M2.500 10h5v4h-5zM10.500 10h5v4h-5z" fill="#bbb" stroke="#333" />
              </svg>
            </button>
            <button type="button" aria-label="Abonnement">
              <svg viewBox="0 0 18 18" className="size-[18px]" aria-hidden="true">
                <path d="M2 5c0-4 7-4 7 1l7 7v3h-3l-7-6C3 10 2 8 2 5z" fill="#f0f0f0" stroke="#444" />
                <circle cx="5" cy="5" r="1.200" fill="#444" />
              </svg>
            </button>
            <button type="button" aria-label="Communication">
              <svg viewBox="0 0 18 18" className="size-[18px]" aria-hidden="true">
                <path d="M4 3c-1 6 3 10 10 8zM9 7l5-5M4 16h10l-2-3H7z" fill="#f0f0f0" stroke="#333" />
              </svg>
            </button>
            <button type="button" aria-label="Favoris">
              <svg viewBox="0 0 18 18" className="size-[18px]" aria-hidden="true">
                <path d="M9 1.500l2 5.500h5.500l-4.300 3.500 1.500 5.500L9 13l-4.700 3 1.500-5.500L1.500 7H7z" fill="#fff" stroke="#333" />
              </svg>
            </button>
          </div>
          <button type="button" aria-label="Aide" className="ml-4">
            <svg viewBox="0 0 18 18" className="size-[18px]" aria-hidden="true">
              <circle cx="9" cy="9" r="7.500" fill="#fff" stroke="#444" />
              <path d="M6.500 7c0-3.500 5-3.500 5 0 0 2-2.500 2-2.500 4M9 12v2" fill="none" stroke="#1f4fae" strokeWidth="1.900" />
            </svg>
          </button>
          <svg viewBox="0 0 6 4" className="ml-1 h-[3px] w-[5px]" aria-hidden="true">
            <path d="M0 0h6L3 4z" fill="#555" />
          </svg>
        </div>
        <div className="flex h-[17px] w-[109px] shrink-0 justify-end">
          <button type="button" aria-label="Réduire" className="flex w-6 justify-center">
            <svg viewBox="0 0 24 17" className="h-[17px] w-6" aria-hidden="true">
              <path d="M6 11.500h8" stroke="#111" strokeWidth="2" />
            </svg>
          </button>
          <button type="button" aria-label="Restaurer" className="flex w-6 justify-center">
            <svg viewBox="0 0 24 17" className="h-[17px] w-6" aria-hidden="true">
              <path d="M6.500 6.500h6v6h-6zM8.500 6V4.500h6v6H13" fill="none" stroke="#222" />
            </svg>
          </button>
          <button type="button" aria-label="Fermer" className="flex w-[39px] justify-center bg-[#c75050]">
            <svg viewBox="0 0 24 17" className="h-[17px] w-6" aria-hidden="true">
              <path d="M10 6l6 6M16 6l-6 6" stroke="#fff" strokeWidth="1.600" />
            </svg>
          </button>
        </div>
      </div>
      <nav className="flex h-[19px] items-center bg-linear-to-b from-[#8e8e8e] to-[#626262] pl-[52px]">
        <div className="flex gap-[21px] font-['Open_Sans',sans-serif] text-[11px] leading-4 text-[#f0f0f0]">
          {MENUS.map((menu) => (
            <button key={menu} type="button" className="whitespace-nowrap">
              {menu}
            </button>
          ))}
        </div>
        <svg viewBox="0 0 42 14" className="ml-auto h-3.5 w-[42px]" aria-hidden="true">
          <path d="M3 10h9M18 6h6v6h-6zM21 6V3h6v6h-3M34 4l6 7M40 4l-6 7" fill="none" stroke="#1c1c1c" strokeWidth="1.400" />
        </svg>
      </nav>
      <button
        type="button"
        aria-label="Menu de l’application"
        className="absolute top-0 left-0 flex h-[39px] w-[39px] flex-col items-center border border-[#222] bg-linear-to-b from-[#a8a8a8] to-[#7c7c7c]"
      >
        <svg viewBox="0 0 24 27" className="h-[27px] w-6" aria-hidden="true">
          <path d="M1 3l8 6 13-5-8 9 9 13-10-5-4-4-8 9z" fill="#e0972a" />
          <path d="M1 3l8 6v8l-8 9z" fill="#b06d12" />
          <path d="M1 3l13 10-5 4z" fill="#8a5410" />
          <path d="M14 13l9 13-10-5-4-4z" fill="#d18a1f" />
        </svg>
        <span className="font-['Open_Sans',sans-serif] text-[8px] leading-[9px] font-semibold text-[#111]">PRO</span>
      </button>
    </header>
  )
}

function Grip() {
  return <span className="mx-0.5 h-6 w-0.5 shrink-0 border-l-2 border-dotted border-[#c4c4cc]" />
}

function Toolbars() {
  return (
    <div className="shrink-0 bg-[#f2f3f8]">
      <div className="flex h-[30px] items-center">
        <div className="flex h-full items-center border-b border-[#c9cad0]">
          <Grip />
          {FILE_TOOLS.map((tool) => (
            <ToolButton key={tool.name} tool={tool} />
          ))}
          <span className="w-2" />
          {CALC_TOOLS.map((tool) => (
            <ToolButton key={tool.name} tool={tool} />
          ))}
          <span className="w-2" />
          {VIEW_TOOLS.map((tool) => (
            <ToolButton key={tool.name} tool={tool} />
          ))}
          <button
            type="button"
            aria-label="Gestionnaire d’objets"
            className="ml-0.5 flex size-[26px] items-center justify-center border border-[#8d8da0] bg-[#dcdde8]"
          >
            <svg viewBox="0 0 22 20" className="h-5 w-[22px]" aria-hidden="true">
              <rect x="1" y="1" width="20" height="18" fill="#fff" stroke="#1f2f7c" strokeWidth="1.500" />
              <path d="M1 1h20v3H1z" fill="#1f2f7c" />
              <path d="M4 6v11M4 8h4M4 12h4M4 16h4" fill="none" stroke="#222" />
              <path d="M8 7h4v2H8zM8 11h4v2H8zM8 15h4v2H8z" fill="#222" stroke="#8d1f28" />
              <path d="M15 7h4M15 10h4M15 13h4M15 16h4" stroke="#6080c0" />
            </svg>
          </button>
          <div className="relative ml-0.5 h-5 w-[178px]">
            <select
              aria-label="Bureau"
              className="block size-full appearance-none border border-[#c4c4c8] bg-white pl-[21px] font-['Liberation_Sans',sans-serif] text-[10px] leading-4 text-black"
            >
              <option>Géométrie</option>
            </select>
            <svg viewBox="0 0 16 12" className="pointer-events-none absolute top-1 left-1 h-3 w-4" aria-hidden="true">
              <path d="M1 8l3-6h11v6h-3v2H9V8H6v3H4V8z" fill="#c8c022" stroke="#222" />
              <path d="M5 5h10" stroke="#222" />
            </svg>
            <ChevronDown strokeWidth={3} className="pointer-events-none absolute top-1.5 right-1 size-2.5 text-[#444]" />
          </div>
          <span className="h-full w-px bg-[#b9b9bd]" />
        </div>
      </div>
      <div className="flex h-[29px] items-center">
        <Grip />
        <ToolButton tool={{ name: 'Sélection de noeuds', icon: SELECT_NODE }} />
        <Combo label="Noeuds" className="w-28" />
        <span className="w-2" />
        <ToolButton tool={{ name: 'Sélection de barres', icon: SELECT_BAR }} />
        <Combo label="Barres" className="w-28" />
        <span className="w-0.5" />
        <ToolButton tool={{ name: 'Sélection graphique', icon: SELECT_HAND }} />
        <span className="w-1.5" />
        <ToolButton tool={{ name: 'Sélection par fenêtre', icon: SELECT_FRAME }} />
        <ToolButton tool={{ name: 'Sélection spéciale', icon: SELECT_GREY }} />
        <span className="w-2" />
        <ToolButton tool={{ name: 'Cas de charge', icon: CASE_LOAD }} />
        <Combo label="Cas" disabled className="ml-0.5 w-28" />
        <ToolButton tool={{ name: 'Modes', icon: MODE_A }} />
        <span className="w-1.5" />
        <ToolButton tool={{ name: 'Combinaisons', icon: MODE_B }} />
        <Combo label="Mode" disabled className="w-28" />
        <ToolButton tool={{ name: 'Diagrammes', icon: DIAGRAM_BOWL }} />
        <ToolButton tool={{ name: 'Modes propres', icon: DIAGRAM_WAVE }} />
        <span className="h-full w-px bg-[#b9b9bd]" />
      </div>
    </div>
  )
}

function ObjectTree() {
  return (
    <div className="mr-1.5 ml-1 h-[226px] overflow-hidden border-t-2 border-b border-l-2 border-[#7c7c7c] bg-white">
      <table className="w-full border-collapse text-left text-[10px] leading-[15px]">
        <thead>
          <tr className="h-[17px] border-b border-[#f0f0f0]">
            <th className="w-[133px] pl-[5px] font-normal">Objets</th>
            <th className="border-l border-[#ececec] pl-1 font-normal">
              <span className="block w-[62px] border-r border-[#ececec]">Nombre d&apos;...</span>
            </th>
          </tr>
        </thead>
        <tbody>
          <tr className="h-[15px]">
            <td colSpan={2} className="p-0">
              <span className="flex">
                <svg viewBox="0 0 28 15" className="h-[15px] w-7" aria-hidden="true">
                  <path d="M7.500 12v3M12 7.500h14" stroke="#999" strokeDasharray="1 1" />
                  <path d="M3.500 3.500h8v8h-8z" fill="#fff" stroke="#8a8a8a" />
                  <path d="M5.500 7.500h4" stroke="#222" />
                </svg>
                Objets du modèle
              </span>
            </td>
          </tr>
          {TREE_ROWS.map((row) => (
            <tr key={row.label} className="h-[15px]">
              <td className="p-0">
                <span className="flex">
                  <svg viewBox="0 0 58 15" className="h-[15px] w-[58px]" aria-hidden="true">
                    <path d="M7.500 0v15M26.500 0v15M31 7.500h6" stroke="#999" strokeDasharray="1 1" />
                    <path d="M22.500 3.500h8v8h-8z" fill="#fff" stroke="#8a8a8a" />
                    <path d="M24.500 7.500h5M26.500 5v5" stroke="#222" />
                    {row.icon}
                  </svg>
                  {row.label}
                </span>
              </td>
              <td className="py-0 pl-[5px]">{row.count}</td>
            </tr>
          ))}
          <tr className="h-[15px]">
            <td colSpan={2} className="p-0">
              <span className="flex">
                <svg viewBox="0 0 28 15" className="h-[15px] w-7" aria-hidden="true">
                  <path d="M7.500 0v7.500h19" fill="none" stroke="#999" strokeDasharray="1 1" />
                </svg>
                Objets auxiliaires
              </span>
            </td>
          </tr>
        </tbody>
      </table>
    </div>
  )
}

function ObjectPanel() {
  return (
    <aside className="flex w-[243px] shrink-0 flex-col border-r border-[#a0a0a0] bg-[#f0f0f0] font-['Liberation_Sans',sans-serif] text-[#222]">
      <div className="flex h-3.5 items-center justify-between border-b border-[#777] pt-0.5 pr-1 pl-1">
        <h2 className="text-[10px] leading-3">Gestionnaire d&apos;objets</h2>
        <button type="button" aria-label="Fermer le panneau" className="flex size-2.5 items-center justify-center bg-[#c4c4c4]">
          <svg viewBox="0 0 10 10" className="size-2.5" aria-hidden="true">
            <path d="M2 2l6 6M8 2L2 8" stroke="#777" />
          </svg>
        </button>
      </div>
      <div className="ml-1 flex h-[31px] items-center gap-2 pl-1">
        {PANEL_TOOLS.map((tool, i) => (
          <div key={tool.name} className="flex items-center">
            {i === 3 && <span className="mr-3.5 h-4 w-px bg-[#888]" />}
            {i === 4 && <span className="mr-1.5 h-4 w-px bg-[#888]" />}
            <button type="button" aria-label={tool.name}>
              <svg viewBox="0 0 16 16" className="size-4" aria-hidden="true">
                {tool.icon}
              </svg>
            </button>
          </div>
        ))}
      </div>
      <ObjectTree />
      <div role="tablist" className="flex h-[21px] items-start pt-0.5 pl-[3px] leading-4">
        <button type="button" aria-label="Précédent" className="flex size-4 items-center justify-center border-r border-b border-[#aaa]">
          <svg viewBox="0 0 6 8" className="h-2 w-1.5" aria-hidden="true">
            <path d="M6 0v8L1 4z" fill="#999" />
          </svg>
        </button>
        <button type="button" aria-label="Suivant" className="flex size-4 items-center justify-center border-r border-b border-[#aaa]">
          <svg viewBox="0 0 6 8" className="h-2 w-1.5" aria-hidden="true">
            <path d="M0 0v8l5-4z" fill="#999" />
          </svg>
        </button>
        <svg viewBox="0 0 8 16" className="h-4 w-2" aria-hidden="true">
          <path d="M1 0h7v16H6z" fill="#fff" />
          <path d="M1 0l5 16" stroke="#222" />
        </svg>
        <button
          type="button"
          role="tab"
          aria-selected="true"
          className="h-4 bg-white px-0.5 font-['Open_Sans',sans-serif] text-[11px] font-bold"
        >
          Géométrie
        </button>
        <svg viewBox="0 0 12 16" className="h-4 w-3" aria-hidden="true">
          <path d="M0 0h8L3 16H0z" fill="#fff" />
          <path d="M8 0L3 16M5 7l4 9" stroke="#222" />
        </svg>
        <button type="button" role="tab" aria-selected="false" className="px-0.5 font-['Open_Sans',sans-serif] text-[10px]">
          Groupes
        </button>
        <svg viewBox="0 0 12 16" className="h-4 w-3" aria-hidden="true">
          <path d="M11 0L6 16" stroke="#222" strokeWidth="1.500" />
        </svg>
      </div>
      <div className="mr-0.5 flex min-h-0 flex-1 border-t-[3px] border-l-2 border-[#6c6c6c] bg-[#eee]">
        <table className="h-[18px] border-collapse text-[11px] leading-4 text-[#333]">
          <thead>
            <tr className="h-[18px] bg-[#c3c3c3]">
              <th className="w-[89px] border-r border-b border-[#888] font-normal">Nom</th>
              <th className="w-[84px] border-r border-b border-[#888] font-normal">Valeur</th>
              <th className="w-[35px] border-r border-b border-[#888] font-normal">Unité</th>
            </tr>
          </thead>
        </table>
        <div className="mr-0.5 ml-auto flex w-[15px] flex-col items-center bg-[#f2f2f2]">
          <ChevronUp strokeWidth={3} className="my-0.5 size-2.5 shrink-0 text-[#444]" />
          <span className="w-3 flex-1 bg-[#cdcdcd]" />
          <ChevronDown strokeWidth={3} className="my-0.5 size-2.5 shrink-0 text-[#444]" />
        </div>
      </div>
      <div className="mr-0.5 flex h-[17px] border-b border-[#ddd] bg-[#fcfcfc]">
        <svg viewBox="0 0 22 16" className="h-4 w-[22px] bg-[#f0f0f0]" aria-hidden="true">
          <path d="M3 0l6 15h6l7-15z" fill="#fcfcfc" />
          <path d="M3 .5l6 15h5l7-15" fill="none" stroke="#111" />
        </svg>
        <span className="flex-1 border-t border-black" />
      </div>
      <div className="flex h-6 items-center gap-px pl-px">
        {PANEL_TABS.map((tool) => (
          <button
            key={tool.name}
            type="button"
            aria-label={tool.name}
            className="flex h-4 w-5 items-center justify-center border-r-2 border-b-2 border-[#777] bg-[#f6f6f6]"
          >
            <svg viewBox="0 0 14 14" className="size-3.5" aria-hidden="true">
              {tool.icon}
            </svg>
          </button>
        ))}
      </div>
    </aside>
  )
}

function LevelTag({ x, y, w, text }: { x: number; y: number; w: number; text: string }) {
  return (
    <g>
      <rect x={x - w / 2} y={y - 11} width={w} height="21" rx="10.500" fill="none" stroke="#b0b0b6" />
      <text x={x} y={y + 5} textAnchor="middle" fontSize="14" fill="#a2a2a8">
        {text}
      </text>
    </g>
  )
}

function StructureScene() {
  return (
    <svg
      viewBox="248 102 985 563"
      preserveAspectRatio="xMidYMid slice"
      className="size-full font-['Liberation_Sans',sans-serif]"
      role="img"
      aria-label="Vue 3D de la structure"
    >
      <defs>
        <radialGradient id="cubeShadow">
          <stop offset="0" stopColor="#8a8a94" stopOpacity=".7" />
          <stop offset="1" stopColor="#8a8a94" stopOpacity="0" />
        </radialGradient>
      </defs>

      {/* ground grid */}
      <path
        d="M706 539L903 625M681 541L462 630M462 641L520 665M903 643L840 668M942 645L990 665M425 645L400 655"
        fill="none"
        stroke="#98a2b6"
        strokeDasharray="8 4 2 4"
      />
      <path d="M693.500 142v14M439.500 244v12M920.500 243v12" stroke="#a2a2a8" strokeDasharray="6 2" />

      {/* columns */}
      <g>
        <path d="M685 360h9v178l-9-3z" fill="#2d4f58" />
        <path d="M694 360h19v169l-19 9z" fill="#7cdaeb" />
        <path d="M421 274l19 5v360l-19-7z" fill="#2d4f58" />
        <path d="M440 290h19v342l-19 7z" fill="#7cdaeb" />
        <path d="M421 272l10-3v8z" fill="#7cdaeb" />
        <path d="M902 290h18v349l-18-8z" fill="#2d4f58" />
        <path d="M920 275l19-3v359l-19 8z" fill="#7cdaeb" />
        <path d="M930 268l9 4-9 4z" fill="#2d4f58" />
        <path d="M458.500 300v332l-18 7M712.500 385v144l-18 9M938.500 273v358l-18 8" fill="none" stroke="#12706f" strokeWidth=".8" />
      </g>

      {/* slab, tucked under the beams */}
      <path d="M694 172L474 262l198 90 217-90z" fill="#a9b2c6" />

      {/* rear beams */}
      <path d="M458 255l236-93v17l-209 84-12 1z" fill="#7cdaeb" />
      <path d="M694 162l208 92-21 9-187-84z" fill="#2d4f58" />
      <g stroke="#12706f" strokeWidth=".8">
        <path d="M431 250l253-101 10 4v8.500l-236 93-27-1z" fill="#64b1bf" />
        <path d="M703 149l228 102-29 3.500-208-93v-8.500z" fill="#64b1bf" />
      </g>

      {/* front beams */}
      <path d="M902 254l29-3v16l-10-9z" fill="#2d4f58" />
      <g stroke="#12706f" strokeWidth=".8">
        <path d="M431 258l27-3 214 92 4 12-9 6-9-4z" fill="#64b1bf" />
        <path d="M929 258l-27-4-230 93-4 12 8 0z" fill="#64b1bf" />
        <path d="M431 251l10 3-10 5z" fill="#8fdde8" />
      </g>
      <path d="M431 258l227 103v29l-10 1-217-94z" fill="#2d4f58" />
      <path d="M676 359l253-101v38l-243 95-19 6v-16l9-5z" fill="#7cdaeb" stroke="#12706f" strokeWidth=".8" />

      {/* front column */}
      <path d="M648 376l10-3 9 7v286h-19z" fill="#2d4f58" />
      <path d="M667 380l9-4 10 14v276h-19z" fill="#7cdaeb" />
      <path d="M685.500 391v275" stroke="#12706f" />
      <g fill="none" stroke="#15827d" strokeWidth=".9">
        <path d="M648 391v-17l9 4v17zM676 395v-16l9-4v17zM431 259v37M440 283v14l-9 0M920 300v-21l9-4v21zM439 255l9-4 9 4-8 4zM685 157l9-4 9 4-9 4zM902 254l9-4 9 4-9 4zM658 351l9-4 9 4-9 4z" />
      </g>

      {/* orbit pivot and pointer */}
      <circle cx="661" cy="340" r="27" fill="#c0c800" fillOpacity=".68" />
      <path d="M637 353l21 8v7c-9-2-16-7-21-15z" fill="#1f3fb4" />
      <path d="M668 359h8v9l-8-4z" fill="#1f3fb4" />
      <path d="M658 358h10v10h-10z" fill="#6cf000" />
      <path d="M658 372l9 8v-6z" fill="#7cdaeb" />
      <path d="M667 374l8-4v8l-8 3z" fill="#1d3238" />
      <path d="M658 370l9-3 8 3-8 5z" fill="#b9b3b8" stroke="#333" strokeWidth=".6" />
      <g fill="none">
        <path d="M663 330c5 4 5 18 0 23" stroke="#222" strokeWidth="4" />
        <path d="M663 330c5 4 5 18 0 23" stroke="#ccc" strokeWidth="2" />
        <path d="M649 340c4-5 20-5 24 0" stroke="#222" strokeWidth="4" />
        <path d="M649 340c4-5 20-5 24 0" stroke="#ccc" strokeWidth="2" />
        <path d="M661 329c-5 3-5 12-4 17" stroke="#222" strokeWidth="5" />
        <path d="M648 341c2 6 8 6 13 5M674 341c-2 6-5 5-8 5" stroke="#222" strokeWidth="5" />
        <path d="M648 341c2 6 8 6 13 5M674 341c-2 6-5 5-8 5" stroke="#fff" strokeWidth="3" />
        <path d="M661 329c-5 3-5 12-4 17" stroke="#fff" strokeWidth="3" />
      </g>
      <g fill="#fff" stroke="#222" strokeWidth=".9">
        <path d="M653 342h8l-3 7z" />
        <path d="M669 337l7 3-5 5z" />
        <path d="M656 350l7-1-1 7z" />
      </g>

      <LevelTag x={693} y={110} w={30} text="B" />
      <LevelTag x={693} y={132} w={30} text="2" />
      <LevelTag x={439} y={234} w={30} text="1" />
      <LevelTag x={920} y={233} w={32} text="A" />
      <path d="M427 275.500h-38a10.500 10.500 0 0 0 0 21h38M932 275.500h38a10.500 10.500 0 0 1 0 21h-38" fill="none" stroke="#b0b0b6" />
      <text x="407" y="291" textAnchor="middle" fontSize="14" fill="#a2a2a8">
        +3,00
      </text>
      <text x="951" y="291" textAnchor="middle" fontSize="14" fill="#a2a2a8">
        +3,00
      </text>
      <LevelTag x={408} y={645} w={58} text="±0,00" />
      <LevelTag x={387} y={653} w={31} text="B" />
      <LevelTag x={951} y={645} w={58} text="±0,00" />
      <LevelTag x={970} y={653} w={31} text="2" />

      {/* view cube */}
      <g>
        <ellipse cx="1183" cy="176" rx="44" ry="20" fill="url(#cubeShadow)" />
        <path d="M1151 132l34-10 31 10-2 42-31 16-29-14z" fill="#dfe1e8" />
        <g fill="none" stroke="#a6a8b0" strokeDasharray="6 2">
          <path d="M1151 132l34-10 31 10-33 12z" fill="#e9ebf0" />
          <path d="M1151 132l3 44 29 14v-46" />
          <path d="M1216 132l-2 42-31 16" />
        </g>
        <g fill="#8d8f98" fontWeight="bold" textAnchor="middle" className="font-['Open_Sans',sans-serif]">
          <text fontSize="8" transform="translate(1183 136) rotate(-12)">
            HAUT
          </text>
          <text fontSize="8" transform="translate(1167 164) rotate(19)">
            GAUCHE
          </text>
          <text fontSize="9" transform="translate(1200 164) rotate(-19)">
            AVANT
          </text>
        </g>
      </g>
    </svg>
  )
}

function Viewport() {
  return (
    <main className="flex min-w-0 flex-1 flex-col border-t border-l border-[#6e7080] font-['Liberation_Sans',sans-serif]">
      <div className="flex min-h-0 flex-1">
        <div className="relative min-w-0 flex-1 border-r border-b border-[#222] bg-linear-to-b from-[#eeeef0] via-[#dfe5f4] to-[#cbddfd]">
          <div className="absolute inset-0">
            <StructureScene />
          </div>
          <div className="absolute inset-x-0 bottom-0 flex gap-1 pl-[276px] text-[12px] leading-[14px] text-white">
            <span className="w-[73px] rounded-sm bg-linear-to-b from-[#a0a4ac] to-[#505050] text-center font-bold">3D</span>
            <span className="w-[278px] rounded-sm bg-linear-to-b from-[#a0a4ac] to-[#505050] pl-2 whitespace-nowrap">
              <b>Z = 3,00 m</b> - <i>Lignes de construction +3,00</i>
            </span>
            <span className="ml-auto w-[103px] rounded-sm bg-linear-to-b from-[#c3cde2] to-[#9ba8c2] blur-[2px]" />
          </div>
          {/* orientation triad */}
          <svg
            viewBox="0 0 80 80"
            className="absolute bottom-0.5 left-[3px] size-20 border border-r-2 border-b-2 border-[#9aa2b4] border-r-[#333b48] border-b-[#333b48] bg-[#cfdffb] font-['Liberation_Sans',sans-serif] font-bold"
            aria-hidden="true"
          >
            <path d="M29 51l14-6" stroke="#2b2be0" strokeWidth="2.500" />
            <path d="M29 51l-12-5" stroke="#1f8a3c" strokeWidth="2.500" />
            <path d="M41 41l11-1-9 8z" fill="#2b2be0" />
            <path d="M9 41l11 1-4 6z" fill="#1f8a3c" />
            <path d="M29 52V34" stroke="#e8272f" strokeWidth="5" />
            <path d="M29 25l5 11H24z" fill="#e8272f" />
            <text x="28" y="24" fontSize="13" fontWeight="normal" fill="#e8272f">
              Z
            </text>
            <text x="9" y="42" fontSize="12" fill="#1f8a3c">
              Y
            </text>
            <text x="52" y="42" fontSize="12" fill="#2b2be0">
              X
            </text>
          </svg>
        </div>
        <div className="flex w-[18px] shrink-0 flex-col items-center bg-[#f0f0f0] py-1">
          <ChevronUp strokeWidth={3} className="size-2.5 shrink-0 text-[#333]" />
          <span className="h-[202px]" />
          <span className="h-[132px] w-3.5 bg-[#cbcbcb]" />
          <ChevronDown strokeWidth={3} className="mt-auto size-2.5 shrink-0 text-[#333]" />
        </div>
      </div>
      <div className="flex h-[18px] shrink-0 items-center bg-[#f0f0f0]">
        <div className="flex gap-0.5 pl-0.5">
          {DISPLAY_TOOLS.map((tool, i) => (
            <SmallIcon key={tool.name} tool={tool} framed={[3, 4, 6, 9].includes(i)} />
          ))}
        </div>
        <div className="flex h-full min-w-0 flex-1 items-center">
          <ChevronLeft strokeWidth={3} className="mx-1 size-2.5 shrink-0 text-[#333]" />
          <span className="w-[27%]" />
          <span className="h-3.5 w-[41%] bg-[#cbcbcb]" />
          <ChevronRight strokeWidth={3} className="mr-3 ml-auto size-2.5 shrink-0 text-[#333]" />
        </div>
        <div className="flex gap-0.5">
          {SCENE_TOOLS.map((tool) => (
            <SmallIcon key={tool.name} tool={tool} />
          ))}
        </div>
        <svg viewBox="0 0 18 18" className="size-[18px] shrink-0" aria-hidden="true">
          <path d="M14 6v2M14 10v2M14 14v2M10 10v2M10 14v2M6 14v2" stroke="#aaa" strokeWidth="2" />
        </svg>
      </div>
    </main>
  )
}

function SideToolbar() {
  return (
    <div className="flex w-6 shrink-0 flex-col gap-2 overflow-hidden border-l border-[#d4d4d4] bg-[#f0f0f0] pt-2 pl-0.5">
      {SIDE_TOOLS.map((group) => (
        <div key={group[0].name} className="flex flex-col">
          {group.map((tool) => (
            <button key={tool.name} type="button" aria-label={tool.name} className="flex h-[27px] items-center">
              <svg viewBox="0 0 22 22" className="size-[22px] shrink-0" aria-hidden="true">
                {tool.icon}
              </svg>
            </button>
          ))}
        </div>
      ))}
    </div>
  )
}

function StatusBar() {
  return (
    <footer className="flex h-4 shrink-0 items-center border-b border-[#aaa] bg-[#f0f0f0] font-['Open_Sans',sans-serif] text-[10px] leading-[14px] text-[#111]">
      <div className="flex gap-[3px] pl-1">
        {STATUS_TOOLS.map((tool) => (
          <button key={tool.name} type="button" aria-label={tool.name}>
            <svg viewBox="0 0 14 14" className="size-3.5" aria-hidden="true">
              {tool.icon}
            </svg>
          </button>
        ))}
      </div>
      <div className="ml-auto flex w-[201px] items-center gap-1.5">
        <span className="size-[11px] rounded-full border border-[#888] bg-[#ccc]" />
        Résultats MEF: absents
      </div>
      <div className="flex w-[34px] border-l border-[#ddd]" />
      <div className="flex w-12 border-l border-[#ddd] pl-1.5">9</div>
      <div className="flex w-[68px] items-center gap-2.5 border-l border-[#ddd] pl-1">
        <svg viewBox="0 0 12 12" className="size-3" aria-hidden="true">
          <path d="M1 8V2h4v6M1 5h4M6 5h2M10 2v6M0 10.500h12" fill="none" stroke="#222" />
        </svg>
        10
      </div>
      <div className="w-[143px] border-l border-[#ddd] pl-2">B R20x30</div>
      <div className="flex w-[185px] items-center gap-1.5 border-l border-[#ddd] pl-1.5">
        <svg viewBox="0 0 12 12" className="size-3" aria-hidden="true">
          <path d="M2.500 0v12M0 9.500h12" stroke="#222" />
          <path d="M3 2.500h7v7" fill="none" stroke="#a3202b" strokeDasharray="2 1" />
        </svg>
        x=-0,52; y=1,27; z=3,00
      </div>
      <div className="flex w-[93px] items-center gap-1.5 border-l border-[#ddd] pl-1">
        <svg viewBox="0 0 14 12" className="h-3 w-3.5" aria-hidden="true">
          <path d="M1 3h10M2 9h11M10 1l3 2v2M4 7L1 9l3 2" fill="none" stroke="#222" strokeWidth="1.400" />
        </svg>
        0,00
      </div>
      <div className="w-[84px] border-l border-[#ddd] pl-1.5 whitespace-nowrap">[m] [kN] [Deg]</div>
    </footer>
  )
}

export default function App() {
  return (
    <div className="flex h-screen w-full overflow-hidden bg-[#f0f0f0]">
      <div className="flex min-w-0 flex-1 flex-col">
        <Header />
        <Toolbars />
        <div className="relative flex min-h-0 flex-1">
          <ObjectPanel />
          <span className="w-1 shrink-0" />
          <Viewport />
          <SideToolbar />
          <div className="pointer-events-none absolute right-[50px] bottom-[-6px] font-['Open_Sans',sans-serif] whitespace-nowrap text-[#8b8f98]/60">
            <p className="-ml-1 text-[18px] leading-6">Activer Windows</p>
            <p className="-ml-1 text-[13px] leading-[19px]">Accédez aux paramètres de l&apos;ordinateur pour</p>
            <p className="-ml-1 text-[13px] leading-[19px]">activer Windows.</p>
          </div>
        </div>
        <div className="flex h-5 shrink-0 items-center border-y border-[#e2e2e2] bg-[#f0f0f0]">
          <span className="ml-0.5 h-[15px] w-[34px] bg-white pl-0.5 font-['Liberation_Sans',sans-serif] text-[10px] leading-[15px] text-[#222]">
            Vue
          </span>
        </div>
        <StatusBar />
      </div>
      <svg className="h-full w-1 shrink-0 bg-[#0c0c10]" aria-hidden="true">
        <defs>
          <pattern id="speckle" width="4" height="96" patternUnits="userSpaceOnUse">
            {SPECKLES.map((dot, i) => (
              <rect key={i} x={dot.x} y={dot.y} width="1" height="1" fill={dot.fill} />
            ))}
          </pattern>
        </defs>
        <rect width="4" height="100%" fill="url(#speckle)" />
      </svg>
    </div>
  )
}
